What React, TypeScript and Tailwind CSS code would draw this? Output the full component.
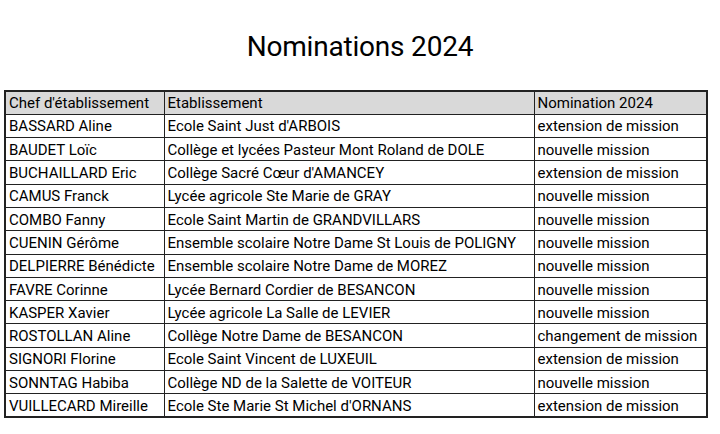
const ROWS: [string, string, string][] = [
  ['BASSARD Aline', "Ecole Saint Just d'ARBOIS", 'extension de mission'],
  ['BAUDET Loïc', 'Collège et lycées Pasteur Mont Roland de DOLE', 'nouvelle mission'],
  ['BUCHAILLARD Eric', "Collège Sacré Cœur d'AMANCEY", 'extension de mission'],
  ['CAMUS Franck', 'Lycée agricole Ste Marie de GRAY', 'nouvelle mission'],
  ['COMBO Fanny', 'Ecole Saint Martin de GRANDVILLARS', 'nouvelle mission'],
  ['CUENIN Gérôme', 'Ensemble scolaire Notre Dame St Louis de POLIGNY', 'nouvelle mission'],
  ['DELPIERRE Bénédicte', 'Ensemble scolaire Notre Dame de MOREZ', 'nouvelle mission'],
  ['FAVRE Corinne', 'Lycée Bernard Cordier de BESANCON', 'nouvelle mission'],
  ['KASPER Xavier', 'Lycée agricole La Salle de LEVIER', 'nouvelle mission'],
  ['ROSTOLLAN Aline', 'Collège Notre Dame de BESANCON', 'changement de mission'],
  ['SIGNORI Florine', 'Ecole Saint Vincent de LUXEUIL', 'extension de mission'],
  ['SONNTAG Habiba', 'Collège ND de la Salette de VOITEUR', 'nouvelle mission'],
  ['VUILLECARD Mireille', "Ecole Ste Marie St Michel d'ORNANS", 'extension de mission'],
];

const cell = 'border border-[#222] px-[3px] pt-[2px] h-[23.3px] leading-none align-middle whitespace-nowrap';

export default function App() {
  return (
    <div className="h-[434px] w-[720px] bg-white font-['Roboto',sans-serif] text-black">
      <h1 className="pt-[31px] text-center text-[28px] leading-[32px] tracking-[-0.2px]">Nominations 2024</h1>
      <table className="ml-[4px] mt-[27px] w-[702px] table-fixed border-collapse border-2 border-[#222] text-[15px]">
        <colgroup>
          <col className="w-[159px]" />
          <col className="w-[370px]" />
          <col className="w-[173px]" />
        </colgroup>
        <thead>
          <tr className="bg-[#d9d9d9]">
            <th className={`${cell} text-left font-normal`}>Chef d'établissement</th>
            <th className={`${cell} text-left font-normal`}>Etablissement</th>
            <th className={`${cell} text-left font-normal`}>Nomination 2024</th>
          </tr>
        </thead>
        <tbody>
          {ROWS.map((r) => (
            <tr key={r[0]}>
              <td className={cell}>{r[0]}</td>
              <td className={cell}>{r[1]}</td>
              <td className={cell}>{r[2]}</td>
            </tr>
          ))}
        </tbody>
      </table>
    </div>
  );
}
